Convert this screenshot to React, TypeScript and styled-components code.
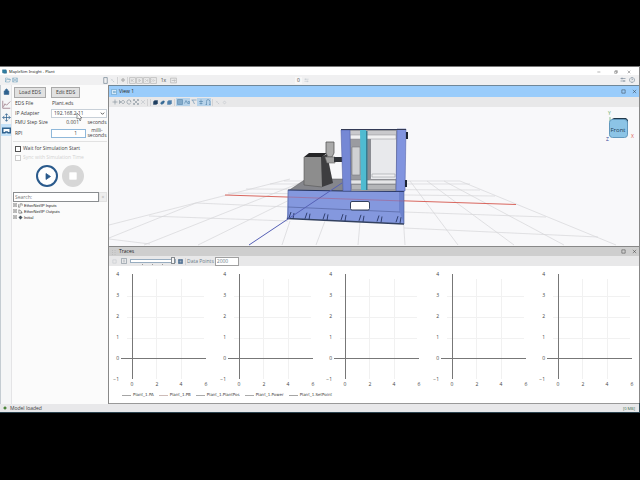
import React from "react";
import styled, { createGlobalStyle, css } from "styled-components";

const Global = createGlobalStyle`
  * { box-sizing: border-box; }
  body { margin: 0; background: #000; }
  button, input, select { font: inherit; color: inherit; margin: 0; padding: 0; }
`;

const Stage = styled.div`
  min-height: 100vh;
  padding: 66px 0;
  background: #000;
  font-family: "Open Sans", "Noto Sans", sans-serif;
  font-size: 5px;
  line-height: 7px;
  color: #3c3c3c;
`;

const Desktop = styled.div`
  padding: 0 1px 1px 0;
  background: linear-gradient(#888 0 97%, #2c4450 97%);
`;

const AppWindow = styled.main`
  display: flex;
  flex-direction: column;
  background: #f0f0f1;
`;

const TitleBar = styled.header`
  display: flex;
  align-items: center;
  gap: 2px;
  height: 9px;
  padding: 1px 6px 0 2px;
  border-top: 1px solid #777;
  background: #fff;
  color: #222;
  font-family: "Noto Sans", sans-serif;
  font-size: 4px;
`;

const Spacer = styled.span`
  flex: 1;
`;

const IconButton = styled.button<{ $w?: number; $on?: boolean; $faded?: boolean }>`
  display: inline-flex;
  align-items: center;
  justify-content: center;
  flex: none;
  width: ${(p) => p.$w ?? 7}px;
  height: 8px;
  border: 0;
  background: ${(p) => (p.$on ? "#b7d3ea" : "transparent")};
  opacity: ${(p) => (p.$faded ? 0.4 : 1)};
`;

const SpeedButton = styled(IconButton)`
  color: #444;
`;

const Glyph = styled.svg<{ $size?: number }>`
  display: block;
  flex: none;
  width: ${(p) => p.$size ?? 7}px;
  height: ${(p) => p.$size ?? 7}px;
  fill: none;
  stroke: currentColor;
`;

const Toolbar = styled.div`
  display: flex;
  align-items: center;
  height: 10px;
  padding: 0 2px 0 4px;
  background: #f0f0f1;
  color: #5a6f80;
`;

const FileTools = styled.div`
  display: flex;
  width: 98px;
`;

const PlayTools = styled.div`
  display: flex;
  align-items: center;
  color: #aaa;
  background: #ececec;
`;

const Divider = styled.i`
  width: 1px;
  height: 7px;
  margin: 0 1px;
  background: #d2d2d4;
`;

const Counter = styled.output`
  margin-left: 118px;
  padding: 0 2px;
  background: #f7f7f7;
  color: #444;
`;

const Body = styled.div`
  display: grid;
  grid-template-columns: 12px 96px minmax(0, 1fr);
`;

const Rail = styled.nav`
  display: flex;
  flex-direction: column;
  align-items: stretch;
  border-right: 1px solid #e4e4e6;
  border-left: 1px solid #c4ccd2;
  background: #f5f6f7;
  color: #2f628f;
`;

const RailButton = styled.button<{ $active?: boolean }>`
  display: flex;
  align-items: center;
  justify-content: center;
  height: ${(p) => (p.$active ? 12 : 13)}px;
  border: 0;
  background: ${(p) => (p.$active ? "#c5e2f8" : "transparent")};
`;

const Sidebar = styled.aside`
  display: flex;
  flex-direction: column;
  padding: 2px 1px 0;
  background: #fbfbfb;
`;

const EdsButtons = styled.div`
  display: flex;
  gap: 5px;
  padding-left: 1px;
`;

const PushButton = styled.button`
  height: 11px;
  padding: 0 4px;
  border: 1px solid #a9a9a9;
  background: #e1e1e1;
`;

const Form = styled.div`
  display: grid;
  grid-template-columns: 36px 36px 20px;
  align-items: center;
  grid-template-rows: 11px 9px 9px 12px;
  margin: 0 0 0 2px;
`;

const Value = styled.span`
  padding-left: 1px;
`;

const NumberValue = styled.output`
  padding-right: 8px;
  text-align: right;
`;

const AdapterWrap = styled.span`
  position: relative;
  grid-column: 2 / 4;
  display: block;
`;

const AdapterSelect = styled.select`
  display: block;
  width: 100%;
  height: 9px;
  padding: 0 2px;
  border: 1px solid #c8d0d8;
  border-radius: 0;
  background: #fff;
  appearance: none;
`;

const Chevron = styled(Glyph)`
  position: absolute;
  right: 2px;
  top: 2px;
  pointer-events: none;
`;

const Pointer = styled.svg`
  position: absolute;
  left: 25px;
  top: 4px;
  width: 6px;
  height: 8px;
  pointer-events: none;
`;

const RpiInput = styled.input`
  width: 35px;
  height: 9px;
  padding: 0 8px;
  border: 1px solid #8fb8da;
  background: #fff;
  text-align: right;
`;

const Unit = styled.span`
  line-height: 7px;
  text-align: center;
`;

const SplitUnit = styled(Unit)`
  display: flex;
  flex-direction: column;
  line-height: 5px;
`;

const Checks = styled.div`
  display: flex;
  flex-direction: column;
  gap: 2px;
  margin-top: 2px;
  padding: 3px 0 0 2px;
  border-top: 1px solid #e2e2e2;
`;

const CheckLabel = styled.label<{ $disabled?: boolean }>`
  display: flex;
  align-items: center;
  gap: 2px;
  height: 7px;
  color: ${(p) => (p.$disabled ? "#d2d2d2" : "#3c3c3c")};
`;

const Check = styled.input`
  width: 6px;
  height: 6px;
  border: 1px solid #555;
  background: #fff;
  appearance: none;
  &:disabled { border-color: #ccc; }
`;

const RunButtons = styled.div`
  display: flex;
  gap: 4px;
  margin: 4px 0 4px 23px;
`;

const RoundButton = styled.button<{ $stop?: boolean }>`
  display: flex;
  align-items: center;
  justify-content: center;
  width: 22px;
  height: 22px;
  border: 2px solid ${(p) => (p.$stop ? "#d7d7d7" : "#2a5a8c")};
  border-radius: 50%;
  background: ${(p) => (p.$stop ? "#d7d7d7" : "#fff")};
  color: ${(p) => (p.$stop ? "#fff" : "#2a5a8c")};
`;

const SearchRow = styled.div`
  display: flex;
  margin: 1px 0 0;
`;

const SearchInput = styled.input`
  flex: 1;
  min-width: 0;
  height: 10px;
  padding: 0 1px;
  border: 1px solid #8a8d90;
  background: #fff;
  &::placeholder { color: #777; opacity: 1; }
`;

const ClearButton = styled.button`
  width: 8px;
  height: 10px;
  border: 1px solid #e2e2e2;
  background: #eee;
  color: #aaa;
`;

const Tree = styled.ul`
  margin: 0;
  padding: 0;
  list-style: none;
  font-family: "Liberation Sans", sans-serif;
  font-size: 4px;
  color: #222;
`;

const TreeItem = styled.li`
  display: flex;
  align-items: center;
  gap: 1px;
  height: 6px;
`;

const Main = styled.section`
  display: flex;
  flex-direction: column;
  min-width: 0;
  border-left: 1px solid #888;
`;

const PaneHeader = styled.header<{ $active?: boolean }>`
  display: flex;
  align-items: center;
  gap: 2px;
  height: 10px;
  padding: 0 1px 0 2px;
  border-top: 1px solid #888;
  background: ${(p) => (p.$active ? "#99ccfb" : "#cecece")};
  color: #222;
  ${(p) => p.$active && css`height: 12px; border-color: #6f8799;`}
`;

const PaneTitle = styled.h2`
  margin: 0;
  font-size: 5px;
  font-weight: 400;
`;

const PaneTools = styled.div`
  display: flex;
  align-items: center;
  height: 10px;
  padding: 0 2px;
  background: #e8e8e9;
  color: #6b7a87;
`;

const Viewport = styled.svg`
  display: block;
  width: 100%;
  height: 139px;
  background: #f8f8fa;
`;

const PointsLabel = styled.label`
  display: flex;
  align-items: center;
  gap: 1px;
  height: 10px;
`;

const PointsInput = styled.input`
  width: 24px;
  height: 9px;
  padding: 0 1px;
  border: 1px solid #a0a0a0;
  background: #fff;
`;

const Range = styled.input`
  width: 46px;
  height: 8px;
  margin: 0 1px 0 0;
  appearance: none;
  background: linear-gradient(#9a9a9a, #9a9a9a) 12px 7px / 1px 1px no-repeat,
    linear-gradient(#9a9a9a, #9a9a9a) 22px 7px / 1px 1px no-repeat,
    linear-gradient(#9a9a9a, #9a9a9a) 32px 7px / 1px 1px no-repeat;
  &::-webkit-slider-runnable-track { height: 4px; border: 1px solid #98adc0; background: #fff; }
  &::-webkit-slider-thumb {
    appearance: none; width: 4px; height: 7px; margin-top: -3px;
    border: 1px solid #858a8f; background: #f6f6f6;
  }
`;

const Traces = styled.div`
  display: flex;
  flex-direction: column;
  background: #fff;
  padding-top: 1px;
  height: 138px;
  border-bottom: 1px solid #999;
`;

const Charts = styled.div`
  display: grid;
  grid-template-columns: repeat(4, 213fr) 208fr;
`;

const ChartDrawing = styled.svg`
  display: block;
  width: 104px;
  height: 122px;
  font-family: "Open Sans", sans-serif;
  font-size: 5px;
  fill: #444;
`;

const Legend = styled.ul`
  display: flex;
  gap: 5px;
  margin: 3px 0 0;
  padding: 0 0 0 13px;
  list-style: none;
  font-family: "DejaVu Sans", sans-serif;
  font-size: 4px;
  line-height: 6px;
`;

const LegendItem = styled.li<{ $color: string }>`
  display: flex;
  align-items: center;
  gap: 2px;
  &::before { content: ""; width: 9px; height: 1px; background: ${(p) => p.$color}; }
`;

const StatusBar = styled.footer`
  display: flex;
  align-items: center;
  gap: 2px;
  height: 8px;
  padding: 0 4px 0 2px;
  background: #e8e8ea;
`;

const Memory = styled.span`
  color: #3f7050;
  font-size: 4px;
`;

type IconProps = { d: string; size?: number; fill?: string; color?: string; weight?: number };
const Icon = ({ d, size, fill, color, weight = 1 }: IconProps) => (
  <Glyph viewBox="0 0 12 12" $size={size} color={color} strokeWidth={weight} aria-hidden="true">
    <path d={d} fill={fill ?? "none"} />
  </Glyph>
);

const paths = {
  open: "M1 10V2h4l1 2h4v2M1 10l2-5h8l-2 5z",
  save: "M1 2h10v8H1zM3 2v3h6V2M3 10V7h6v3",
  page: "M3 1h6v10H3z",
  brush: "M2 2l8 8M3 6l3-3M7 10l3-3",
  dot: "M6 3a3 3 0 1 0 .1 0z",
  close: "M2 2l8 8M10 2l-8 8",
  square: "M2 2h8v8H2z",
  restore: "M2 4h6v6H2zM4 4V2h6v6H8",
  min: "M1 6h9",
  tune: "M1 3h10M1 8h10M4 1v4M8 6v4",
  help: "M6 1a5 5 0 1 0 .1 0zM4.5 4.5Q6 2 7.5 4.5L6 6.5M6 8v1",
  pan: "M6 1v10M1 6h10M4 3l2-2 2 2M4 9l2 2 2-2M3 4L1 6l2 2M9 4l2 2-2 2",
  cross: "M6 1v10M1 6h10",
  zoom: "M1 3v6l3-3zM8 3a3 3 0 1 0 .1 0",
  rotate: "M3 3Q6 0 9 3M9 9Q6 12 3 9M3 3Q0 6 3 9M9 3v3h2",
  fit: "M2 2l8 8M10 2l-8 8M1 4V1h3M8 1h3v3M1 8v3h3M11 8v3H8",
  cube: "M1 4l3-3h7v7l-3 3H1z",
  mesh: "M1 8l3-4 4-2 3 1-2 5-5 3z",
  grid: "M1 1h10v10H1zM4 1v10M8 1v10M1 4h10M1 8h10",
  path: "M1 9L4 3l3 6M8 5h3v4H8z",
  tee: "M1 2h10M3 2l4 8",
  center: "M6 1v10M2 5h8M3 9h6",
  arch: "M3 11V5q0-4 3-4t4 4v6M1 11h3M8 11h3",
  expand: "M1 1h10v10H1zM3 6h6M6 3v6",
};

const playback = [
  ["First", "M1 1h10v10H1zM4 4v4M8 4L5 6l3 2"],
  ["Play", "M1 1h10v10H1zM5 4l3 2-3 2z"],
  ["Step", "M1 1h10v10H1zM4 4l2 2-2 2M8 4v4"],
  ["Last", "M1 1h10v10H1zM3 4l2 2-2 2M6 4l2 2-2 2"],
];

const viewTools: [string, string, boolean][] = [
  ["Pan", paths.cross, false],
  ["Zoom", paths.zoom, false],
  ["Rotate", paths.rotate, false],
  ["Fit", paths.fit, false],
  ["Select", paths.close, true],
];
const shapeTools: [string, string, string][] = [
  ["Solid", paths.cube, "#203f60"],
  ["Surface", paths.mesh, "#356995"],
  ["Wireframe", paths.cube, "#4e7faa"],
];
const overlayTools: [string, string, boolean][] = [
  ["Grid", paths.grid, true],
  ["Trace path", paths.path, true],
  ["Axes", paths.tee, false],
  ["Centers", paths.center, true],
  ["Joints", paths.arch, true],
];

const traceNames = ["Plant_1.PA", "Plant_1.PB", "Plant_1.PlantPos", "Plant_1.Power", "Plant_1.SetPoint"];
const traceColors = ["#a5a5a5", "#cdbcb9", "#aaaaaa", "#aaaaaa", "#a5a5a5"];

const yTicks = [4, 3, 2, 1, 0, -1];
const xTicks = [0, 2, 4, 6];

function Chart() {
  return (
    <ChartDrawing viewBox="0 0 104 122" role="img" aria-label="Trace plot">
      <g stroke="#f1f1f1">
        {[29, 50, 71].map((y) => <path key={y} d={`M18 ${y}.5H95`} />)}
        {[47, 72].map((x) => <path key={x} d={`M${x}.5 12V112`} />)}
      </g>
      <path d="M23.5 7V112" stroke="#777" />
      <path d="M12 91.5H97" stroke="#777" />
      {yTicks.map((t, i) => (
        <text key={t} x={10} y={9 + i * 21} textAnchor="end">{t < 0 ? `−${-t}` : t}</text>
      ))}
      {xTicks.map((t, i) => (
        <text key={t} x={Math.round(23 + i * 24.5)} y={119} textAnchor="middle">{t}</text>
      ))}
    </ChartDrawing>
  );
}

const ribs = [291, 307, 325, 343, 361, 379, 398];

function Scene() {
  return (
    <Viewport viewBox="109 107 530 139" preserveAspectRatio="xMidYMid slice" role="img" aria-label="Plant model, front view">
      <g stroke="#d6d6d8" strokeWidth="0.7" fill="none">
        <path d="M109 225L290 179M144 245L310 179M198 245L328 181M109 238L196 203M405 245L402 200M458 245L410 181M514 245L427 181M564 245L444 181M460 181L616 245" />
        <path d="M284 181H460M270 184H470M246 189L480 190M228 193L495 196M196 203L288 207M404 212L546 217M149 216L288 221M404 228L598 237M109 239L150 244M290 221L282 245M325 221L316 245M360 222L358 245" />
      </g>
      <path d="M225 195L516 204.500" stroke="#d9675f" />
      <path d="M306 179H344V191H288z" fill="#85868c" stroke="#555" strokeWidth="0.5" />
      <path d="M288 190L343 191L404 191V224L287 218.500z" fill="#8498de" />
      <path d="M399 191h5v33l-5-14z" fill="#6d83ce" />
      <path d="M288 190l55 1 61 .5" stroke="#263460" fill="none" />
      <path d="M287 218.500L404 224" stroke="#33415f" strokeWidth="1.500" />
      <path d="M288 190v25l-1 4M404 191v33M288 207l112 5" stroke="#4b5b96" strokeWidth="0.6" fill="none" />
      {ribs.map((x, i) => (
        <path key={x} d={`M${x} ${212 + i * 0.7}l-2 6M${x + 3} ${213 + i * 0.7}l-1 6`} stroke="#273663" strokeWidth="0.9" />
      ))}
      <rect x="350.500" y="201.500" width="19" height="8.500" rx="1.500" fill="#fff" stroke="#33415f" />

      <path d="M304 157h18v30l-18-2z" fill="#8d8d8d" />
      <path d="M321 157l6-3 6 29-11 4z" fill="#3d3d3f" />
      <path d="M304 157l5-4h18l-5 4z" fill="#242426" />
      <path d="M304 157v28l18 2" stroke="#555" strokeWidth="0.6" fill="none" />
      <path d="M326 142h8v11l-2 4h-4l-2-4z" fill="#aaa" stroke="#555" strokeWidth="0.8" />
      <path d="M325 157h10v6h-8z" fill="#a2a2a2" stroke="#666" strokeWidth="0.6" />
      <path d="M334 157h8v5h-8z" fill="#303338" />

      <path d="M349 130h49v61h-49z" fill="#9a9ba0" />
      <path d="M350 131h46v4h-46z" fill="#c9c9cc" />
      <path d="M371 139h25v40h-25z" fill="#e8e9ec" />
      <path d="M371 139v39l-4 3v-45z" fill="#8a8c92" />
      <path d="M352 147h8v28h-8z" fill="#d0d1d3" stroke="#7a7d82" strokeWidth="0.6" />
      <path d="M350 135h46v4h-46z" fill="#f1f1f2" stroke="#8e8f92" strokeWidth="0.5" />
      <path d="M350 180h46v4h-46z" fill="#e5e5e7" stroke="#77797e" strokeWidth="0.6" />
      <path d="M352 185h43v4h-43z" fill="#b4b5b8" />
      <path d="M372 174h23v3h-23z" fill="#f0f0f2" stroke="#8b8d92" strokeWidth="0.5" />
      <path d="M341 130h9l1 61h-8z" fill="#7588d5" stroke="#46549b" strokeWidth="0.5" />
      <path d="M397 129h9l-1 62h-9z" fill="#8194df" stroke="#46549b" strokeWidth="0.5" />
      <path d="M360 130h6v60h-5z" fill="#4fbbd1" />
      <path d="M366 131h1.500v59H366z" fill="#367c91" />
      <path d="M341 129.500h65" stroke="#333a55" />
      <path d="M406 132h2v7h-2zM405 180h2v7h-2z" fill="#1d2433" />
      <path d="M342 183L249 245" stroke="#5560b5" />
      <path d="M288 197l116 4" stroke="#ad587c" strokeWidth="0.8" opacity="0.65" />

      <path d="M610 117v19" stroke="#8fc391" />
      <path d="M612 119l2-1h12l2 2v14l-3 2h-12z" fill="#21394d" />
      <rect x="609.500" y="119.500" width="18" height="18" rx="3" fill="#8cc4e6" stroke="#6298bd" />
      <text x="618" y="132" textAnchor="middle" fontSize="6" fill="#1e3b55">Front</text>
      <g fontSize="5">
        <text x="608" y="115" fill="#5da862">Y</text>
        <text x="606" y="141" fill="#2b3c96">Z</text>
        <text x="631" y="138" fill="#dd5b55">X</text>
      </g>
    </Viewport>
  );
}

export default function App() {
  return (
    <Stage>
      <Global />
      <Desktop>
        <AppWindow>
          <TitleBar>
            <Icon d="M1 2h9v7H1zM4 4h7v6H4z" size={5} fill="#2f88ae" color="#2f6888" />
            <span>MapleSim Insight - Plant</span>
            <Spacer />
            <IconButton aria-label="Minimize" $w={15}><Icon d={paths.min} size={4} /></IconButton>
            <IconButton aria-label="Restore" $w={15}><Icon d={paths.restore} size={4} /></IconButton>
            <IconButton aria-label="Close" $w={8}><Icon d={paths.close} size={4} /></IconButton>
          </TitleBar>
          <Toolbar>
            <FileTools>
              <IconButton aria-label="Open"><Icon d={paths.open} size={6} color="#6fa0bd" /></IconButton>
              <IconButton aria-label="Save"><Icon d={paths.save} size={6} color="#6fa0bd" /></IconButton>
            </FileTools>
            <IconButton aria-label="New layout"><Icon d={paths.page} /></IconButton>
            <IconButton aria-label="Clear" $faded><Icon d={paths.brush} size={5} /></IconButton>
            <Divider />
            <PlayTools>
              <IconButton aria-label="Record"><Icon d={paths.dot} size={6} fill="#bbb" /></IconButton>
              <Divider />
              {playback.map(([label, d]) => (
                <IconButton key={label} aria-label={label}><Icon d={d} size={7} /></IconButton>
              ))}
              <SpeedButton aria-label="Playback speed" $w={13}>1x</SpeedButton>
              <IconButton aria-label="Loop"><Icon d="M1 2h10v8H1zM3 6h6M7 4l2 2-2 2" /></IconButton>
            </PlayTools>
            <Counter aria-label="Time">0</Counter>
            <IconButton aria-label="Units" $w={10} $faded><Icon d={paths.tune} size={5} /></IconButton>
            <Spacer />
            <IconButton aria-label="Settings" $w={9}><Icon d={paths.tune} size={6} /></IconButton>
            <IconButton aria-label="Help" $w={10}><Icon d={paths.help} size={6} /></IconButton>
          </Toolbar>
          <Body>
            <Rail>
              <RailButton aria-label="Lock"><Icon d="M2 5h8v6H2zM4 5V3q2-3 4 0v2" fill="#2f628f" size={7} /></RailButton>
              <RailButton aria-label="Plots"><Icon d="M1 1v10h10M2 9l2-4 2 2 5-5" size={9} color="#93707c" /></RailButton>
              <RailButton aria-label="Move"><Icon d={paths.pan} size={9} /></RailButton>
              <RailButton aria-label="Connection" $active><Icon d="M1 3h10v6H8L7 8H5L4 9H1z" size={9} fill="#fff" weight={2} /></RailButton>
            </Rail>
            <Sidebar>
              <EdsButtons>
                <PushButton>Load EDS</PushButton>
                <PushButton>Edit EDS</PushButton>
              </EdsButtons>
              <Form>
                <span>EDS File</span><Value>Plant.eds</Value><span />
                <label htmlFor="adapter">IP Adapter</label>
                <AdapterWrap>
                  <AdapterSelect id="adapter"><option>192.168.2.11</option></AdapterSelect>
                  <Chevron viewBox="0 0 12 12" $size={5} strokeWidth="2"><path d="M2 4l4 4 4-4" /></Chevron>
                  <Pointer viewBox="0 0 6 8"><path d="M1 0v6l2-1 1 3 1-1-1-2h2z" fill="#fff" stroke="#555" strokeWidth="0.6" /></Pointer>
                </AdapterWrap>
                <span>FMU Step Size</span><NumberValue>0.001</NumberValue><Unit>seconds</Unit>
                <label htmlFor="rpi">RPI</label>
                <RpiInput id="rpi" defaultValue="1" />
                <SplitUnit><span>milli-</span><span>seconds</span></SplitUnit>
              </Form>
              <Checks>
                <CheckLabel><Check type="checkbox" />Wait for Simulation Start</CheckLabel>
                <CheckLabel $disabled><Check type="checkbox" disabled />Sync with Simulation Time</CheckLabel>
              </Checks>
              <RunButtons>
                <RoundButton aria-label="Run"><Icon d="M4 2l6 4-6 4z" size={9} fill="#2a5a8c" /></RoundButton>
                <RoundButton aria-label="Stop" $stop><Icon d="M1 1h10v10H1z" size={8} fill="#fff" /></RoundButton>
              </RunButtons>
              <SearchRow>
                <SearchInput aria-label="Search" placeholder="Search:" />
                <ClearButton aria-label="Clear search">×</ClearButton>
              </SearchRow>
              <Tree>
                <TreeItem><Icon d={paths.expand} size={4} /><Icon d="M1 3v7h4M5 9V2h5v5" size={5} />EtherNet/IP Inputs</TreeItem>
                <TreeItem><Icon d={paths.expand} size={4} /><Icon d="M2 2v8h6V5zM7 9h4" size={5} />EtherNet/IP Outputs</TreeItem>
                <TreeItem><Icon d={paths.expand} size={4} /><Icon d="M6 2l4 4-4 4-4-4z" size={5} fill="#456" />Initial</TreeItem>
              </Tree>
            </Sidebar>
            <Main>
              <PaneHeader $active>
                <Icon d="M1 1h10v10H1zM3 4h2v4H3M7 4q3 0 3 2T7 8z" size={6} fill="#e6f4ff" color="#4d8ebb" />
                <PaneTitle>View 1</PaneTitle>
                <Spacer />
                <IconButton aria-label="Maximize view" $w={10}><Icon d={paths.square} size={5} /></IconButton>
                <IconButton aria-label="Close view" $w={8}><Icon d={paths.close} size={5} /></IconButton>
              </PaneHeader>
              <PaneTools>
                {viewTools.map(([label, d, faded]) => (
                  <IconButton key={label} aria-label={label} $faded={faded}><Icon d={d} size={6} /></IconButton>
                ))}
                <Divider />
                <Divider />
                {shapeTools.map(([label, d, c]) => (
                  <IconButton key={label} aria-label={label}><Icon d={d} size={5} fill={c} color={c} /></IconButton>
                ))}
                <Divider />
                {overlayTools.map(([label, d, on]) => (
                  <IconButton key={label} aria-label={label} $on={on}><Icon d={d} size={6} color="#41759f" /></IconButton>
                ))}
                <Divider />
                <IconButton aria-label="Camera" $faded><Icon d={paths.brush} size={5} /></IconButton>
                <IconButton aria-label="Record" $faded><Icon d={paths.dot} size={5} /></IconButton>
              </PaneTools>
              <Scene />
              <PaneHeader>
                <Icon d="M3 2v1M8 2v1M3 6v1M8 6v1M3 10v1M8 10v1" size={6} color="#888" />
                <PaneTitle>Traces</PaneTitle>
                <Spacer />
                <IconButton aria-label="Maximize traces" $w={10}><Icon d={paths.square} size={5} /></IconButton>
                <IconButton aria-label="Close traces" $w={8}><Icon d={paths.close} size={5} /></IconButton>
              </PaneHeader>
              <PaneTools>
                <IconButton aria-label="Pause" $faded><Icon d={paths.square} size={5} /></IconButton>
                <IconButton aria-label="Narrow" $w={12}><Icon d="M1 1h10v10H1zM6 3v6" size={6} /></IconButton>
                <Range type="range" min="0" max="4" defaultValue="4" aria-label="Plot count" />
                <IconButton aria-label="Wide"><Icon d={paths.grid} size={5} color="#4d6f92" weight={2} /></IconButton>
                <Divider />
                <PointsLabel>Data Points <PointsInput defaultValue="2000" /></PointsLabel>
              </PaneTools>
              <Traces>
                <Charts>{traceNames.map((name) => <Chart key={name} />)}</Charts>
                <Legend>
                  {traceNames.map((name, i) => <LegendItem key={name} $color={traceColors[i]}>{name}</LegendItem>)}
                </Legend>
              </Traces>
            </Main>
          </Body>
          <StatusBar>
            <Icon d="M6 3l3 3-3 3-3-3z" size={6} fill="#3c7a28" color="#3c7a28" />
            <span>Model loaded</span>
            <Spacer />
            <Memory>[0 MB]</Memory>
          </StatusBar>
        </AppWindow>
      </Desktop>
    </Stage>
  );
}
